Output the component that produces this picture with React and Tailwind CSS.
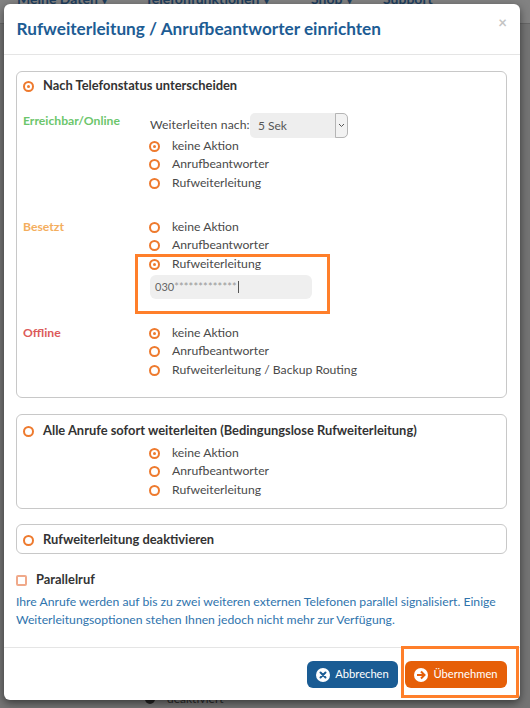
import React from "react";

function Radio({ on }) {
  return (
    <span className="flex h-[11px] w-[11px] shrink-0 items-center justify-center rounded-full border-2 border-[#ee7a2e]">
      {on && <span className="h-[3px] w-[3px] rounded-full bg-[#ee7a2e]" />}
    </span>
  );
}

function Opt({ label, on, cls = "" }) {
  return (
    <div className={`flex h-[18px] items-center ${cls}`}>
      <span className="ml-[-1px] w-[23px]"><Radio on={on} /></span>
      <span className="text-[12.2px] text-[#4a4a4a]">{label}</span>
    </div>
  );
}

function Opts({ active = 0, last = "Rufweiterleitung" }) {
  return (
    <div>
      <Opt label="keine Aktion" on={active === 0} />
      <Opt label="Anrufbeantworter" on={active === 1} />
      <Opt label={last} on={active === 2} cls="mt-px" />
    </div>
  );
}

function Head({ label, on }) {
  return (
    <div className="flex h-[18px] items-center pl-[6px]">
      <span className="w-[20px]"><Radio on={on} /></span>
      <span className="text-[12.9px] font-bold text-[#333333]">{label}</span>
    </div>
  );
}

export default function App() {
  return (
    <div className="relative h-[708px] w-[530px] overflow-hidden bg-[#747474] font-['Lato',sans-serif]">
      <div className="absolute inset-x-0 top-0 h-[24px] border-b border-[#666666] bg-[#828282]" />
      <div className="absolute left-[17px] top-[-12px] flex whitespace-nowrap text-[14px] font-bold text-[#1f3f5f]">
        <span className="w-[128px]">Meine Daten ▾</span>
        <span className="w-[166px]">Telefonfunktionen ▾</span>
        <span className="w-[72px]">Shop ▾</span>
        <span>Support</span>
      </div>
      <div className="absolute left-[145px] top-[690px] flex items-center gap-[12px] text-[12px] text-[#2a2a2a]">
        <span className="h-[10px] w-[10px] rounded-full bg-[#222222]" /><span>deaktiviert</span>
      </div>

      <div className="relative ml-[4px] mt-[4px] flex h-[696px] w-[516px] flex-col rounded-[6px] bg-white shadow-[0_3px_9px_rgba(0,0,0,0.5)]">
        <header className="relative flex h-[51px] shrink-0 items-center border-b border-[#e5e5e5] pl-[12.5px]">
          <h1 className="text-[17.2px] font-bold text-[#1d5c94]">Rufweiterleitung / Anrufbeantworter einrichten</h1>
          <span className="absolute right-[13px] top-[11px] text-[15px] font-bold leading-none text-[#c4c4c4]">×</span>
        </header>

        <main className="flex-1 pl-[12px] pr-[13px] pt-[16px]">
          <section className="h-[327px] rounded-[6px] border border-[#c8c8c8] pt-[5px]">
            <Head label="Nach Telefonstatus unterscheiden" on />
            <div className="mt-[15px] flex">
              <div className="w-[133px] pl-[6px] pt-[2px] text-[12.2px] font-bold leading-[18px] text-[#6cc66c]">Erreichbar/Online</div>
              <div className="pt-[3px]">
                <div className="mb-[-1px] flex h-[25px] items-center whitespace-nowrap">
                  <span className="w-[100px] text-[12.2px] tracking-[0.1px] text-[#4a4a4a]">Weiterleiten nach:</span>
                  <div className="flex h-[25px] w-[98px] items-center justify-between rounded-[5px] bg-[#eeeeee] pl-[8px] text-[12px] text-[#555555]">
                    <span>5 Sek</span>
                    <span className="flex h-full w-[13px] items-center justify-center rounded-r-[5px] border border-[#b5b5b5] bg-[#f2f2f2]">
                      <svg width="7" height="5" viewBox="0 0 7 5" fill="none" stroke="#555" strokeWidth="1"><path d="M1 1l2.5 2.5L6 1" /></svg>
                    </span>
                  </div>
                </div>
                <Opts />
              </div>
            </div>
            <div className="mt-[26px] flex">
              <div className="w-[133px] pl-[6px] text-[12.2px] font-bold leading-[18px] text-[#f4ae5e]">Besetzt</div>
              <div>
                <Opts active={2} />
                <div className="mt-[2px] flex h-[24px] w-[162px] items-center rounded-[6px] bg-[#efefef] pl-[5px] text-[11px] text-[#666666]">
                  <span>030</span><span className="tracking-[0.15px] text-[#999999]">*************</span><span className="ml-px h-[12px] w-px bg-[#555555]" />
                </div>
              </div>
            </div>
            <div className="mt-[25px] flex">
              <div className="w-[133px] pl-[6px] text-[12.2px] font-bold leading-[18px] text-[#dc5a5a]">Offline</div>
              <Opts last="Rufweiterleitung / Backup Routing" />
            </div>
          </section>

          <section className="mt-[16px] h-[95px] rounded-[6px] border border-[#c8c8c8] pt-[7px]">
            <Head label="Alle Anrufe sofort weiterleiten (Bedingungslose Rufweiterleitung)" />
            <div className="ml-[133px] mt-[4px]"><Opts /></div>
          </section>

          <section className="mt-[15px] flex h-[30px] items-center rounded-[6px] border border-[#c8c8c8] pt-[2px]">
            <Head label="Rufweiterleitung deaktivieren" />
          </section>

          <div className="mt-[17px] flex h-[18px] items-center">
            <span className="h-[11px] w-[11px] rounded-[2px] border-2 border-[#f0a98a]" />
            <span className="ml-[9px] text-[12.9px] font-bold text-[#333333]">Parallelruf</span>
          </div>
          <p className="mt-[4px] text-[12.2px] leading-[18px] text-[#2f74ad]">
            Ihre Anrufe werden auf bis zu zwei weiteren externen Telefonen parallel signalisiert. Einige Weiterleitungsoptionen stehen Ihnen jedoch nicht mehr zur Verfügung.
          </p>
        </main>

        <footer className="flex h-[53px] shrink-0 items-start justify-end gap-[7px] border-t border-[#e5e5e5] pr-[13px] pt-[13px]">
          <button className="flex h-[27px] w-[91px] items-center justify-center gap-[5px] rounded-[6px] bg-[#1a5c94] text-[11.2px] text-white">
            <span className="flex h-[14px] w-[14px] items-center justify-center rounded-full bg-white">
              <svg width="8" height="8" viewBox="0 0 8 8" stroke="#1a5c94" strokeWidth="2" strokeLinecap="round"><path d="M1.5 1.5l5 5M6.5 1.5l-5 5" /></svg>
            </span>
            Abbrechen
          </button>
          <button className="flex h-[27px] w-[102px] items-center justify-center gap-[5px] rounded-[6px] bg-[#e65f08] text-[11.2px] text-white">
            <span className="flex h-[14px] w-[14px] items-center justify-center rounded-full bg-white">
              <svg width="10" height="10" viewBox="0 0 10 10" fill="none" stroke="#e65f08" strokeWidth="2"><path d="M1 5h7M5 1.5L8.5 5 5 8.5" /></svg>
            </span>
            Übernehmen
          </button>
        </footer>
      </div>

      <div className="absolute left-[135px] top-[254px] h-[60px] w-[195px] border-[3px] border-[#ff7f2a]" />
      <div className="absolute left-[401px] top-[646px] h-[52px] w-[118px] border-[3px] border-[#ff7f2a]" />
    </div>
  );
}
